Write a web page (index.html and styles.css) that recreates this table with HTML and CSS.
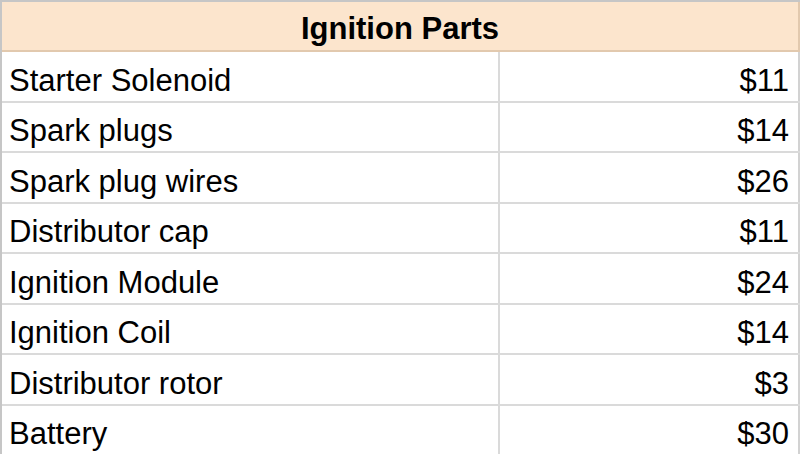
FILE: index.html
```html
<!DOCTYPE html>
<html>
<head>
<meta charset="utf-8">
<link rel="stylesheet" href="styles.css">
</head>
<body>
<div class="sheet">
  <div class="header">Ignition Parts</div>
  <div class="row"><div class="name">Starter Solenoid</div><div class="price">$11</div></div>
  <div class="row"><div class="name">Spark plugs</div><div class="price">$14</div></div>
  <div class="row"><div class="name">Spark plug wires</div><div class="price">$26</div></div>
  <div class="row"><div class="name">Distributor cap</div><div class="price">$11</div></div>
  <div class="row"><div class="name">Ignition Module</div><div class="price">$24</div></div>
  <div class="row"><div class="name">Ignition Coil</div><div class="price">$14</div></div>
  <div class="row"><div class="name">Distributor rotor</div><div class="price">$3</div></div>
  <div class="row"><div class="name">Battery</div><div class="price">$30</div></div>
</div>
</body>
</html>
```
FILE: styles.css
```css
html, body {
  margin: 0;
  padding: 0;
  background: #ffffff;
}
.sheet {
  width: 800px;
  height: 454px;
  overflow: hidden;
  box-sizing: border-box;
  border-top: 2px solid #c6c6c6;
  border-left: 2px solid #c6c6c6;
  font-family: "Liberation Sans", Arial, sans-serif;
  font-size: 31px;
  color: #000;
}
.header {
  height: 50px;
  box-sizing: border-box;
  background: #fce5cd;
  border-bottom: 2px solid #e2c9ae;
  border-right: 2px solid #e2c9ae;
  font-weight: bold;
  display: flex;
  align-items: flex-end;
  justify-content: center;
  padding-bottom: 4px;
  line-height: 35px;
}
.row {
  display: grid;
  grid-template-columns: 498px 1fr;
  height: 50.5px;
  box-sizing: border-box;
  border-bottom: 2px solid #dadada;
}
.name, .price {
  display: flex;
  align-items: flex-end;
  padding-bottom: 3px;
  line-height: 35px;
  box-sizing: border-box;
}
.name {
  border-right: 2px solid #dadada;
  padding-left: 7px;
}
.price {
  justify-content: flex-end;
  padding-right: 9px;
  border-right: 2px solid #d2d2d2;
}
```
